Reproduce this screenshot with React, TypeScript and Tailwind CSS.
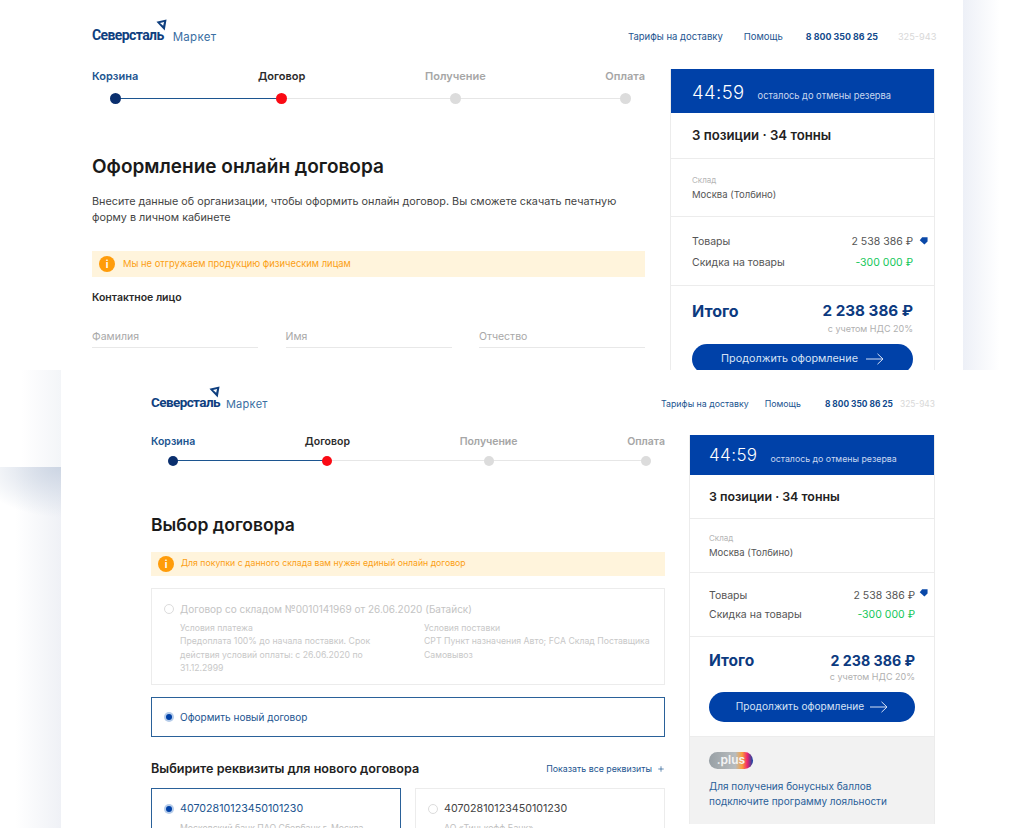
import { Plus } from "lucide-react";

const font = { fontFamily: "Inter, 'Noto Sans', sans-serif" };

function Logo({ big }: { big?: boolean }) {
    return (
        <div className={big ? "flex items-end gap-[6px] -translate-y-px" : "flex items-end gap-[9px]"}>
            <div className="relative">
                <span className={`font-['Roboto'] font-bold tracking-[-0.6px] text-[#0f3f7f] leading-[18px] ${big ? "text-[13.5px]" : "text-[14px]"}`}>
                    Северсталь
                </span>
                <svg viewBox="0 0 12 13" className={`absolute -top-[3px] w-[11px] h-[12px] ${big ? "right-0" : "-right-[3px]"}`}>
                    <path d="M0.5 3 L11.5 0.5 L9.5 12.5 Z M4.4 4.4 L7.8 7.4 L8.8 3.2 Z" fill="#0f3f7f" fillRule="evenodd" />
                </svg>
            </div>
            <span className={`leading-[18px] tracking-[0.3px] text-[#3a6fa3] ${big ? "text-[11px]" : "text-[11.5px]"}`}>Маркет</span>
        </div>
    );
}

function Step({ label, color, dot, gap, big }: { label: string; color: string; dot: string; gap: string; big?: boolean }) {
    return (
        <div className={`relative flex flex-col items-center ${gap}`}>
            <span className={`leading-[14px] font-semibold ${big ? "text-[11px]" : "text-[10.5px]"} ${color}`}>{label}</span>
            <span className={`rounded-full ${big ? "w-[11px] h-[11px]" : "w-[10px] h-[10px]"} ${dot}`} />
        </div>
    );
}

function Stepper({ big }: { big?: boolean }) {
    const gap = big ? "gap-[10px]" : "gap-[7px]";
    const top = big ? "top-[29px]" : "top-[25px]";
    const start = big ? "left-[24px]" : "left-[21px]";
    return (
        <div className="relative flex justify-between">
            <div className={`absolute h-px bg-[#e6e6e6] ${top} ${start} ${big ? "right-[20px]" : "right-[19px]"}`} />
            <div className={`absolute h-px bg-[#1c5590] ${top} ${start} ${big ? "w-[166px]" : "w-[155px]"}`} />
            <Step big={big} gap={gap} label="Корзина" color="text-[#1c5590]" dot="bg-[#0a2f6e]" />
            <Step big={big} gap={gap} label="Договор" color="text-[#2b2b2b]" dot="bg-[#fa0a14]" />
            <Step big={big} gap={gap} label="Получение" color="text-[#a6a6a6]" dot="bg-[#dcdcdc]" />
            <Step big={big} gap={gap} label="Оплата" color="text-[#a6a6a6]" dot="bg-[#dcdcdc]" />
        </div>
    );
}

function Alert({ text, big }: { text: string; big?: boolean }) {
    return (
        <div className={`flex items-center bg-[#fff4dc] px-[7px] ${big ? "h-[26px] gap-[8px]" : "h-[24px] gap-[7px]"}`}>
            <span className="flex items-center justify-center w-[16px] h-[16px] rounded-full bg-[#ff9c0a] text-white text-[10px] font-bold">i</span>
            <span className={`text-[#fb9f14] ${big ? "text-[9.4px]" : "text-[8.7px]"}`}>{text}</span>
        </div>
    );
}

function TagIcon() {
    return (
        <svg viewBox="0 0 10 10" className="w-[9px] h-[9px]">
            <path d="M3.5 1.5 H9.5 V6 L6 9.5 L0.8 4.6 Z" fill="#0a48a8" />
        </svg>
    );
}

function LongArrow() {
    return (
        <svg viewBox="0 0 18 12" className="w-[18px] h-[12px]" fill="none" stroke="currentColor" strokeWidth="1">
            <path d="M0 6 H17 M11.5 0.8 L17 6 L11.5 11.2" />
        </svg>
    );
}

function Summary({ compact }: { compact?: boolean }) {
    const px = compact ? "px-[19px]" : "px-[21px]";
    return (
        <div className={`border-x border-[#ececec] ${compact ? "w-[246px]" : "w-[265px]"}`}>
            <div className={`flex items-end bg-[#0041a8] text-white ${px} ${compact ? "h-[40px] pb-[9px] gap-[13px]" : "h-[44px] pb-[10px] gap-[13px]"}`}>
                <span className={`leading-[22px] font-light tracking-[0.4px] ${compact ? "text-[17px]" : "text-[18.5px]"}`}>44:59</span>
                <span className={`leading-[14px] text-[#c9d8f0] ${compact ? "text-[8.8px]" : "text-[9.3px]"}`}>осталось до отмены резерва</span>
            </div>
            <div className={`flex items-center pt-[1px] border-b border-[#ececec] text-[#222] font-semibold ${px} ${compact ? "h-[44px] text-[12.4px]" : "h-[46px] text-[13.2px]"}`}>
                3 позиции · 34 тонны
            </div>
            <div className={`flex flex-col justify-center gap-[2px] border-b border-[#ececec] ${px} ${compact ? "h-[54px]" : "h-[58px]"}`}>
                <span className="text-[8px] leading-[11px] text-[#b5b5b5]">Склад</span>
                <span className="text-[9.5px] leading-[13px] text-[#555]">Москва (Толбино)</span>
            </div>
            <div className={`relative flex flex-col justify-center pt-[2px] border-b border-[#ececec] text-[10.5px] leading-[14px] text-[#555] ${px} ${compact ? "h-[64px] gap-[5px]" : "h-[69px] gap-[7px]"}`}>
                <div className="flex justify-between">
                    <span>Товары</span>
                    <span>2 538 386 ₽</span>
                </div>
                <div className="flex justify-between">
                    <span>Скидка на товары</span>
                    <span className="text-[#14c75a]">-300 000 ₽</span>
                </div>
                <div className={`absolute right-[6px] ${compact ? "top-[15px]" : "top-[19px]"}`}>
                    <TagIcon />
                </div>
            </div>
            <div className={`flex flex-col ${compact ? "pt-[15px] pb-[14px] border-b border-[#ececec]" : "pt-[15px] pb-[15px]"} ${px}`}>
                <div className={`flex items-center justify-between text-[#0c3a80] font-bold ${compact ? "leading-[18px]" : "leading-[20px]"}`}>
                    <span className={compact ? "text-[15.5px]" : "text-[16px]"}>Итого</span>
                    <span className={compact ? "text-[14.2px]" : "text-[15.2px]"}>2 238 386 ₽</span>
                </div>
                <div className={`text-right text-[9px] leading-[13px] text-[#b0b0b0] ${compact ? "" : "mt-[1px]"}`}>с учетом НДС 20%</div>
                <div className={`flex items-center justify-center h-[30px] mt-[9px] rounded-full bg-[#0041a8] text-[#d5e1f5] ${compact ? "gap-[6px] text-[10.15px]" : "gap-[8px] text-[10.8px]"}`}>
                    Продолжить оформление
                    <LongArrow />
                </div>
            </div>
            {compact && (
                <div className="bg-[#f2f2f2] h-[87px] px-[19px] pt-[15px]">
                    <div className="flex items-center justify-center w-[44px] h-[17px] rounded-full bg-[linear-gradient(90deg,#98a0a5_0%,#b8bcbe_60%,#fba03a_75%,#f0246e_87%,#0a48a8_100%)] text-[#f4f4f4] text-[12px] font-semibold leading-none pb-[2px]">
                        .plus
                    </div>
                    <p className="mt-[10px] text-[10px] leading-[15px] text-[#2a6199]">
                        Для получения бонусных баллов
                        <br />
                        подключите программу лояльности
                    </p>
                </div>
            )}
        </div>
    );
}

function Field({ label }: { label: string }) {
    return (
        <div className="w-[166px] h-[18px] border-b border-[#e8e8e8] text-[10.5px] leading-[14px] text-[#a8a8a8]">{label}</div>
    );
}

function Radio({ active }: { active?: boolean }) {
    return active ? (
        <span className="flex items-center justify-center w-[10px] h-[10px] rounded-full bg-[#b7cdea]">
            <span className="w-[6px] h-[6px] rounded-full bg-[#0041a8]" />
        </span>
    ) : (
        <span className="w-[10px] h-[10px] rounded-full border border-[#dcdcdc] bg-white" />
    );
}

function BackWindow() {
    return (
        <section className="absolute left-0 top-0 w-[963px] h-[370px] overflow-hidden bg-white">
            <div className="flex gap-[25px] pl-[92px]">
                <div className="w-[553px] pt-[18px]">
                    <div className="h-[28px] flex items-end">
                        <Logo />
                    </div>
                    <div className="mt-[23px]">
                        <Stepper big />
                    </div>
                    <h1 className="mt-[50px] text-[19px] leading-[26px] font-semibold text-[#1a1a1a]">Оформление онлайн договора</h1>
                    <p className="mt-[14px] text-[10.8px] leading-[16px] text-[#444]">
                        Внесите данные об организации, чтобы оформить онлайн договор. Вы сможете скачать печатную
                        <br />
                        форму в личном кабинете
                    </p>
                    <div className="mt-[25px]">
                        <Alert big text="Мы не отгружаем продукцию физическим лицам" />
                    </div>
                    <div className="mt-[14px] text-[10.5px] leading-[14px] font-semibold text-[#2a2a2a]">Контактное лицо</div>
                    <div className="mt-[25px] flex justify-between">
                        <Field label="Фамилия" />
                        <Field label="Имя" />
                        <Field label="Отчество" />
                    </div>
                </div>
                <div className="pt-[69px]">
                    <Summary />
                </div>
            </div>
            <nav className="absolute top-[30px] left-[628px] flex items-center text-[9.5px] leading-[14px] text-[#1c5590]">
                <span>Тарифы на доставку</span>
                <span className="ml-[21px]">Помощь</span>
                <span className="ml-[23px] text-[8.9px] font-bold text-[#124a8c]">8 800 350 86 25</span>
                <span className="ml-[20px] text-[9.2px] text-[#d8d8d8]">325-943</span>
            </nav>
        </section>
    );
}

function FrontWindow() {
    return (
        <section className="absolute left-[61px] top-[370px] w-[903px] h-[458px] overflow-hidden bg-white">
            <div className="flex gap-[24px] pl-[90px]">
                <div className="w-[514px] pt-[18px]">
                    <div className="h-[26px] flex items-end">
                        <Logo big />
                    </div>
                    <div className="mt-[21px]">
                        <Stepper />
                    </div>
                    <h1 className="mt-[47px] text-[17.5px] leading-[24px] font-semibold text-[#1a1a1a]">Выбор договора</h1>
                    <div className="mt-[15px]">
                        <Alert text="Для покупки с данного склада вам нужен единый онлайн договор" />
                    </div>
                    <div className="mt-[12px] h-[97px] border border-[#ececec] px-[12px] pt-[13px]">
                        <div className="flex items-center gap-[6px] text-[10px] leading-[14px] text-[#c4c4c4]">
                            <Radio />
                            Договор со складом №0010141969 от 26.06.2020 (Батайск)
                        </div>
                        <div className="mt-[6px] pl-[16px] grid grid-cols-[244px_1fr] text-[8.7px] leading-[13.3px] text-[#c8c8c8]">
                            <div>
                                Условия платежа
                                <br />
                                Предоплата 100% до начала поставки. Срок
                                <br />
                                действия условий оплаты: с 26.06.2020 по
                                <br />
                                31.12.2999
                            </div>
                            <div>
                                Условия поставки
                                <br />
                                CPT Пункт назначения Авто; FCA Склад Поставщика
                                <br />
                                Самовывоз
                            </div>
                        </div>
                    </div>
                    <div className="mt-[12px] h-[40px] flex items-center gap-[6px] border border-[#2a6199] px-[12px] text-[10px] text-[#1c5590]">
                        <Radio active />
                        Оформить новый договор
                    </div>
                    <div className="mt-[24px] flex items-center justify-between">
                        <span className="text-[12.6px] leading-[16px] font-semibold text-[#222]">Выбирите реквизиты для нового договора</span>
                        <span className="flex items-center gap-[5px] text-[8.8px] text-[#1c5590]">
                            Показать все реквизиты
                            <Plus size={8} />
                        </span>
                    </div>
                    <div className="mt-[11px] grid grid-cols-[250px_250px] justify-between">
                        <div className="h-[60px] border border-[#2a6199] px-[12px] pt-[12px]">
                            <div className="flex items-center gap-[6px] text-[10.7px] leading-[16px] text-[#1c5590]">
                                <Radio active />
                                40702810123450101230
                            </div>
                            <div className="mt-[5px] pl-[16px] text-[8.7px] leading-[13px] text-[#c0c0c0]">Московский банк ПАО Сбербанк г. Москва</div>
                        </div>
                        <div className="h-[60px] border border-[#ececec] px-[12px] pt-[12px]">
                            <div className="flex items-center gap-[6px] text-[10.7px] leading-[16px] text-[#444]">
                                <Radio />
                                40702810123450101230
                            </div>
                            <div className="mt-[5px] pl-[16px] text-[8.7px] leading-[13px] text-[#c0c0c0]">АО «Тинькофф Банк»</div>
                        </div>
                    </div>
                </div>
                <div className="pt-[65px]">
                    <Summary compact />
                </div>
            </div>
            <nav className="absolute top-[27px] left-[600px] flex items-center text-[8.8px] leading-[14px] text-[#1c5590]">
                <span>Тарифы на доставку</span>
                <span className="ml-[16px]">Помощь</span>
                <span className="ml-[24px] font-bold text-[8.4px] text-[#124a8c]">8 800 350 86 25</span>
                <span className="ml-[7px] text-[8.4px] text-[#d8d8d8]">325-943</span>
            </nav>
        </section>
    );
}

export default function App() {
    return (
        <div style={font} className="relative w-[1024px] h-[828px] overflow-hidden bg-white">
            <div className="absolute left-0 top-[370px] w-[61px] h-[97px] bg-[linear-gradient(90deg,#ffffff_35%,#f3f5f8_100%)]" />
            <div className="absolute left-0 top-[467px] w-[61px] h-[361px] bg-[radial-gradient(ellipse_85px_50px_at_100%_0%,#ccd5e3_0%,rgba(255,255,255,0)_100%),linear-gradient(90deg,#ffffff_25%,#eff1f6_100%)]" />
            <div className="absolute left-[963px] top-0 w-[61px] h-[370px] bg-[linear-gradient(90deg,#edf0f7_0%,#ffffff_60%)]" />
            <BackWindow />
            <FrontWindow />
        </div>
    );
}
